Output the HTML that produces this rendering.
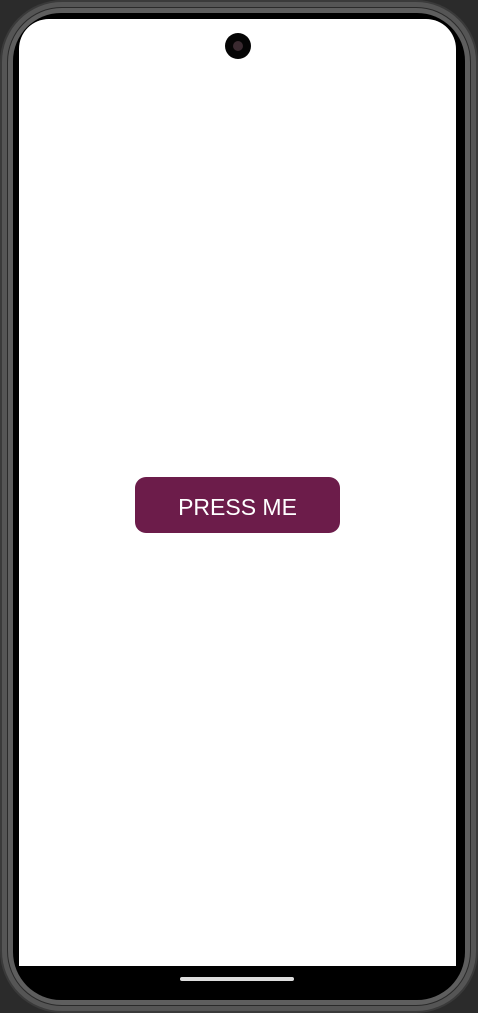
<!DOCTYPE html>
<html><head><style>
html,body{margin:0;padding:0;width:478px;height:1013px;overflow:hidden;background:#2b2b2b;}
.o{position:absolute;left:0;top:0;width:478px;height:1013px;border-radius:62px;background:#3a3a3a;}
.o2{position:absolute;left:2px;top:2px;right:2px;bottom:2px;border-radius:60px;background:#555;}
.o3{position:absolute;left:7px;top:7px;right:7px;bottom:7px;border-radius:55px;background:#2a2a2a;}
.o4{position:absolute;left:8px;top:8px;right:8px;bottom:8px;border-radius:54px;background:#5e5e5e;}
.b{position:absolute;left:13px;top:13px;right:13px;bottom:13px;border-radius:48px;background:#000;}
.s{position:absolute;left:19px;top:19px;width:437px;height:947px;background:#fff;border-radius:30px 30px 0 0;}
.cam{position:absolute;left:225px;top:33px;width:26px;height:26px;border-radius:50%;background:#050505;}
.cam i{position:absolute;left:8px;top:8px;width:10px;height:10px;border-radius:50%;background:#3a2a30;}
.home{position:absolute;left:180px;top:977px;width:114px;height:4px;border-radius:2px;background:#ddd;}
.btn{position:absolute;left:135px;top:477px;width:205px;height:56px;border-radius:11px;background:#6c1c4a;color:#fff;font-family:"Liberation Sans",sans-serif;font-size:23px;line-height:60px;text-align:center;}
</style></head><body>
<div class="o"></div><div class="o2"></div><div class="o3"></div><div class="o4"></div>
<div class="b"></div>
<div class="s"></div>
<div class="cam"><i></i></div>
<div class="home"></div>
<div class="btn">PRESS ME</div>
</body></html>
